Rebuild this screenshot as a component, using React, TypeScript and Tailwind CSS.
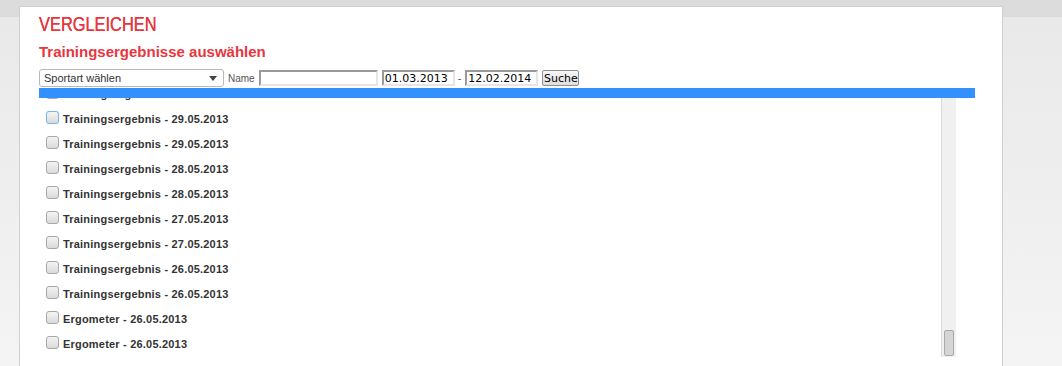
const rows = [
  "Trainingsergebnis - 30.05.2013",
  "Trainingsergebnis - 29.05.2013",
  "Trainingsergebnis - 29.05.2013",
  "Trainingsergebnis - 28.05.2013",
  "Trainingsergebnis - 28.05.2013",
  "Trainingsergebnis - 27.05.2013",
  "Trainingsergebnis - 27.05.2013",
  "Trainingsergebnis - 26.05.2013",
  "Trainingsergebnis - 26.05.2013",
  "Ergometer - 26.05.2013",
  "Ergometer - 26.05.2013",
]

function Check({ focused }: { focused?: boolean }) {
  return (
    <span
      className={
        "mb-[5px] box-border block h-[13px] w-[13px] shrink-0 rounded-[3px] border bg-[linear-gradient(to_bottom,#f4f4f4,#dadada)] " +
        (focused ? "border-[#7fb2e8] shadow-[0_0_1px_#9cc6f2]" : "border-[#a8a8a8]")
      }
    />
  )
}

export default function App() {
  return (
    <div className="h-[366px] overflow-hidden bg-[linear-gradient(to_bottom,#dcdcdc_0px,#dcdcdc_17px,#e9e9e9_17px,#f4f4f4_100%)] pt-[6px] font-['Liberation_Sans',Arial,sans-serif]">
      <div className="ml-[19px] h-[420px] w-[984px] border border-[#cfcfcf] bg-white pl-[19px] pt-[6px]">
        {/* schmale Schrift nachgebildet */}
        <h1 className="origin-left scale-x-[0.82] text-[20px] leading-[23px] text-[#e8363e] [text-shadow:0_0_0.3px_#e8363e]">
          VERGLEICHEN
        </h1>
        <h2 className="mt-[7px] text-[15px] font-bold leading-[17px] text-[#e8363e]">
          Trainingsergebnisse auswählen
        </h2>

        {/* Filterzeile */}
        <div className="mt-[9px] flex h-[18px] items-center">
          <div className="box-border flex h-[18px] w-[185px] items-center justify-between rounded-[3px] border border-[#b9b9b9] bg-white pl-[4px] pr-[6px] text-[11px] text-[#333]">
            <span>Sportart wählen</span>
            <span className="h-0 w-0 border-x-[4.5px] border-t-[5px] border-x-transparent border-t-[#444]" />
          </div>
          <span className="ml-[4px] text-[10px] text-[#555]">Name</span>
          <div className="ml-[4px] box-border h-[16px] w-[119px] border-2 border-b-[#e6e6e6] border-l-[#9a9a9a] border-r-[#e6e6e6] border-t-[#9a9a9a] bg-white" />
          <div className="ml-[4px] box-border flex h-[16px] w-[73px] items-center border-2 border-b-[#e6e6e6] border-l-[#9a9a9a] border-r-[#e6e6e6] border-t-[#9a9a9a] bg-white pl-[1px] font-['DejaVu_Sans',Verdana,sans-serif] text-[11px] leading-none text-black">
            01.03.2013
          </div>
          <span className="ml-[3px] text-[11px] text-[#555]">-</span>
          <div className="ml-[4px] box-border flex h-[16px] w-[73px] items-center border-2 border-b-[#e6e6e6] border-l-[#9a9a9a] border-r-[#e6e6e6] border-t-[#9a9a9a] bg-white pl-[1px] font-['DejaVu_Sans',Verdana,sans-serif] text-[11px] leading-none text-black">
            12.02.2014
          </div>
          <button className="ml-[4px] box-border flex h-[16px] w-[37px] items-center justify-center rounded-[2px] border border-[#8f8f8f] bg-[linear-gradient(to_bottom,#f6f6f6,#dedede)] font-['DejaVu_Sans',Verdana,sans-serif] text-[11px] leading-none text-black">
            Suche
          </button>
        </div>

        <div className="mt-[1px] h-[10px] w-[936px] bg-[#3390ff]" />

        {/* Ergebnisliste */}
        <div className="flex h-[259px] w-[917px]">
          <div className="w-[902px] overflow-hidden">
            <div className="mt-[-16px]">
              {rows.map((r, i) => (
                <div key={i} className="flex h-[25px] items-center pl-[7px]">
                  <Check focused={i === 1} />
                  <span className="ml-[4px] text-[11px] font-bold leading-[13px] tracking-[0.2px] text-[#333]">
                    {r}
                  </span>
                </div>
              ))}
            </div>
          </div>
          <div className="flex w-[15px] flex-col items-center justify-end border-l border-[#dadada] bg-[#f0f0f0] pb-[1px]">
            <div className="h-[26px] w-[10px] rounded-[2px] border border-[#a9a9a9] bg-[#d5d5d5]" />
          </div>
        </div>
      </div>
    </div>
  )
}
